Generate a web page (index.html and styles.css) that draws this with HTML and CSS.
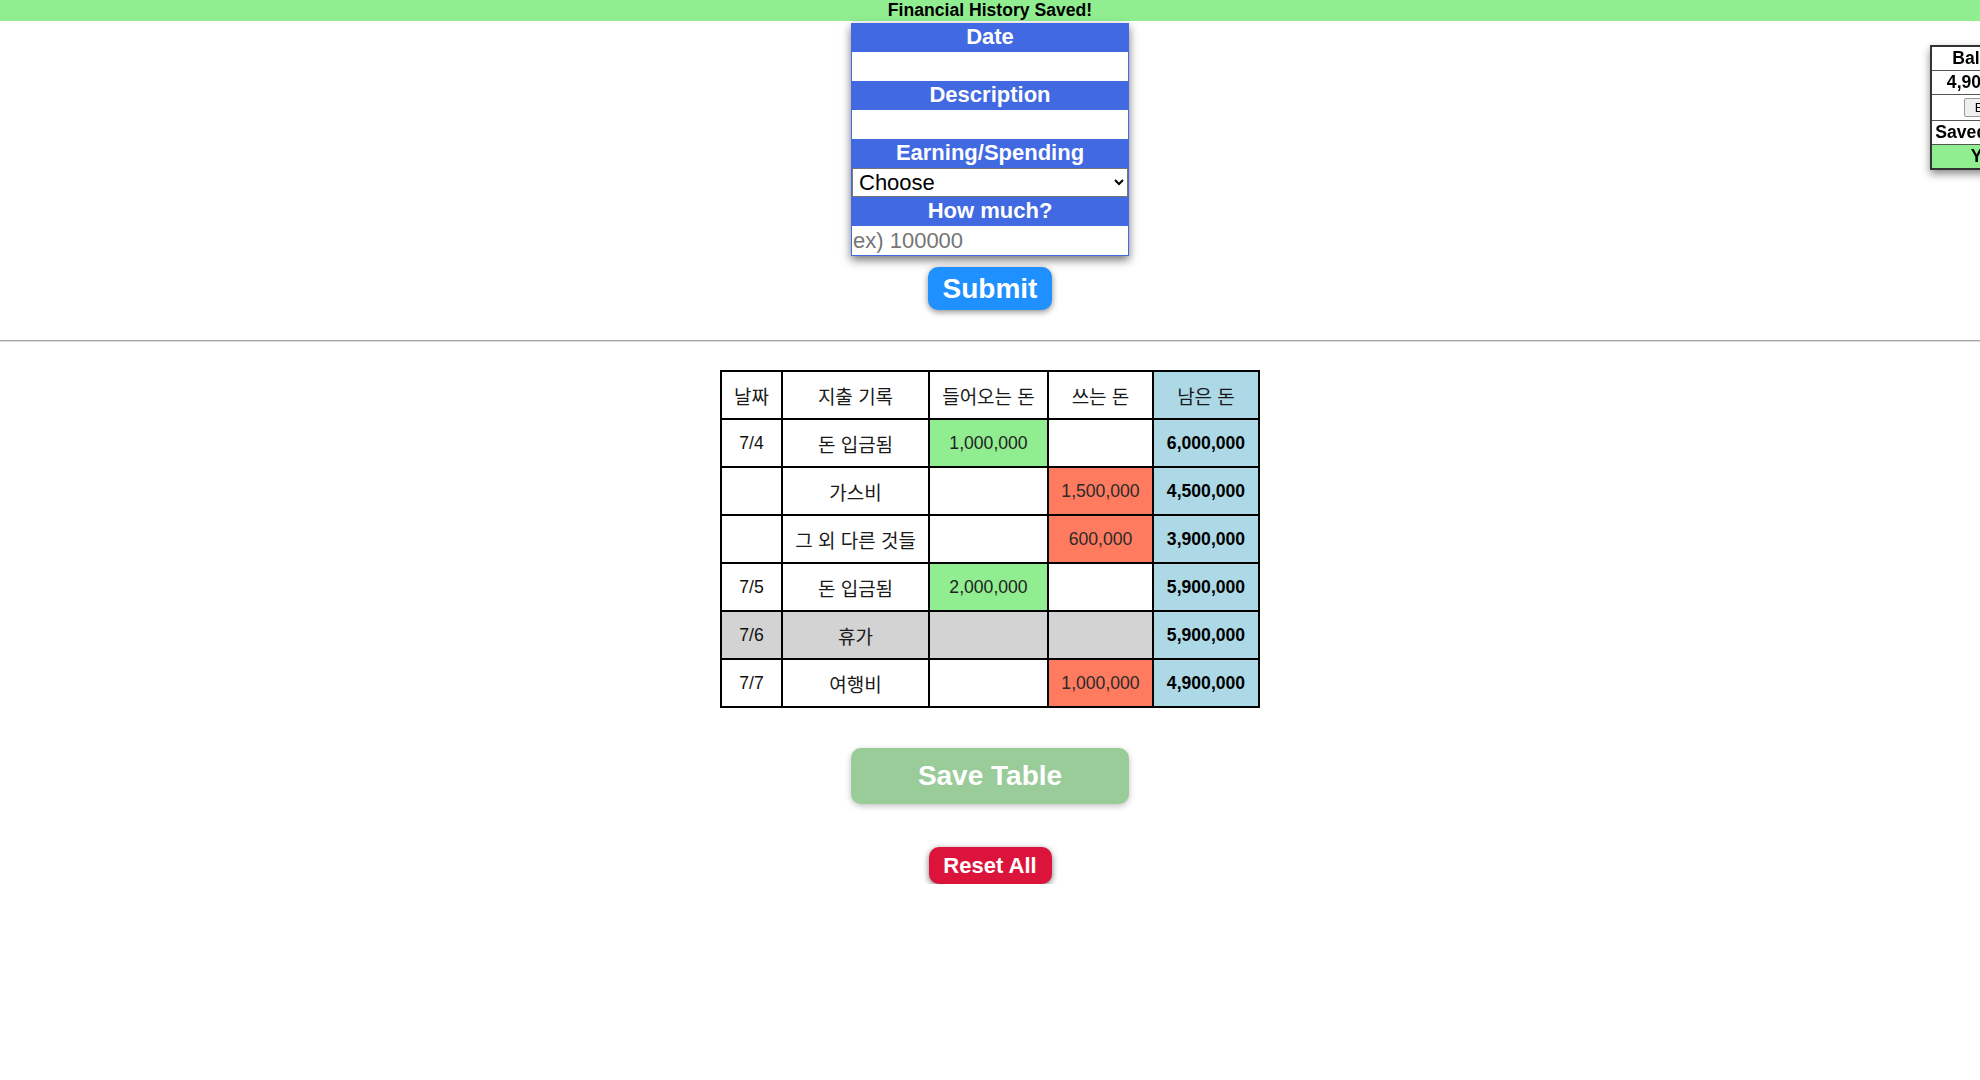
FILE: index.html
```html
<!DOCTYPE html>
<html lang="ko">
<head>
<meta charset="utf-8">
<title>Financial History</title>
<link rel="stylesheet" href="styles.css">
</head>
<body>
<div class="notice">Financial History Saved!</div>

<form class="entry">
  <label class="entry-label">Date</label>
  <input class="entry-input" type="text">
  <label class="entry-label">Description</label>
  <input class="entry-input" type="text">
  <label class="entry-label">Earning/Spending</label>
  <select class="entry-select"><option>Choose</option></select>
  <label class="entry-label">How much?</label>
  <input class="entry-input" type="text" placeholder="ex) 100000">
</form>

<div class="actions submit-wrap">
  <button class="btn-submit" type="button">Submit</button>
</div>

<hr class="divider">

<table class="ledger">
  <thead>
    <tr>
      <th class="c-date ko">날짜</th>
      <th class="c-desc ko">지출 기록</th>
      <th class="c-in ko">들어오는 돈</th>
      <th class="c-out ko">쓰는 돈</th>
      <th class="c-bal ko bal">남은 돈</th>
    </tr>
  </thead>
  <tbody>
    <tr>
      <td>7/4</td><td class="ko">돈 입금됨</td><td class="earn">1,000,000</td><td></td><td class="bal">6,000,000</td>
    </tr>
    <tr>
      <td></td><td class="ko">가스비</td><td></td><td class="spend">1,500,000</td><td class="bal">4,500,000</td>
    </tr>
    <tr>
      <td></td><td class="ko">그 외 다른 것들</td><td></td><td class="spend">600,000</td><td class="bal">3,900,000</td>
    </tr>
    <tr>
      <td>7/5</td><td class="ko">돈 입금됨</td><td class="earn">2,000,000</td><td></td><td class="bal">5,900,000</td>
    </tr>
    <tr class="off">
      <td>7/6</td><td class="ko">휴가</td><td></td><td></td><td class="bal">5,900,000</td>
    </tr>
    <tr>
      <td>7/7</td><td class="ko">여행비</td><td></td><td class="spend">1,000,000</td><td class="bal">4,900,000</td>
    </tr>
  </tbody>
</table>

<div class="actions save-wrap">
  <button class="btn-save" type="button">Save Table</button>
</div>
<div class="actions reset-wrap">
  <button class="btn-reset" type="button">Reset All</button>
</div>

<div class="status">
  <div class="status-row">Balance</div>
  <div class="status-row">4,900,000</div>
  <div class="status-row status-btn"><button class="mini-btn" type="button">Edit</button></div>
  <div class="status-row">Saved Table</div>
  <div class="status-row status-yes">Yes</div>
</div>
</body>
</html>
```

FILE: styles.css
```css
html, body {
  margin: 0;
  padding: 0;
  background: #fff;
  overflow: hidden;
}
body {
  font-family: "Liberation Sans", Arial, "Noto Sans CJK KR", sans-serif;
  color: #000;
  font-size: 17.6px;
}

.notice {
  background: #90ee90;
  height: 21px;
  line-height: 21px;
  text-align: center;
  font-weight: bold;
  font-size: 17.6px;
}

.entry {
  width: 278px;
  box-sizing: border-box;
  margin: 2px auto 0;
  background: #4169e1;
  padding: 0 1px 1px;
  box-shadow: 0 4px 9px rgba(0, 0, 0, 0.55);
  display: flex;
  flex-direction: column;
}
.entry-label {
  display: block;
  height: 29px;
  line-height: 28px;
  text-align: center;
  color: #fff;
  font-weight: bold;
  font-size: 22px;
}
.entry-input {
  display: block;
  width: 100%;
  box-sizing: border-box;
  height: 29px;
  margin: 0;
  border: none;
  background: #fff;
  padding: 0 1px;
  font-family: "Liberation Sans", Arial, sans-serif;
  font-size: 22px;
  color: #000;
  outline: none;
}
.entry-input::placeholder {
  color: #757575;
}
.entry-select {
  display: block;
  width: 100%;
  box-sizing: border-box;
  height: 29px;
  margin: 0;
  border: 1px solid #767676;
  border-radius: 0;
  background: #fff;
  padding: 0 2px;
  font-family: "Liberation Sans", Arial, sans-serif;
  font-size: 22px;
  color: #000;
}

.actions {
  display: flex;
  justify-content: center;
}
.submit-wrap {
  margin-top: 11px;
}
.btn-submit {
  width: 124px;
  height: 43px;
  border: none;
  border-radius: 10px;
  background: #1e90ff;
  color: #fff;
  font-family: "Liberation Sans", Arial, sans-serif;
  font-weight: bold;
  font-size: 28px;
  padding: 0;
  box-shadow: 0 2px 6px rgba(0, 0, 0, 0.45);
}

.divider {
  margin: 30px 0 0;
  height: 0;
  border: none;
  border-top: 1px solid #a8a8a8;
  border-bottom: 1px solid #dcdcdc;
}

.ledger {
  margin: 28px auto 0;
  border-collapse: collapse;
  border: 2px solid #000;
  font-size: 17.6px;
}
.ledger th,
.ledger td {
  border: 2px solid #000;
  height: 46px;
  padding: 0;
  text-align: center;
  vertical-align: middle;
  font-weight: normal;
  color: #111;
}
.ledger .ko {
  font-size: 19px;
  color: #1a1a1a;
}
.c-date { width: 59px; }
.c-desc { width: 145px; }
.c-in { width: 117px; }
.c-out { width: 103px; }
.c-bal { width: 104px; }

.ledger td.bal {
  font-weight: bold;
  color: #000;
}
.ledger .bal {
  background: #add8e6;
}
.ledger .earn {
  background: #90ee90;
  color: #222;
}
.ledger .spend {
  background: #ff7b5f;
  color: #2a2a2a;
}
.ledger tr.off td {
  background: #d3d3d3;
}
.ledger tr.off td.bal {
  background: #add8e6;
}

.save-wrap {
  margin-top: 40px;
}
.btn-save {
  width: 278px;
  height: 56px;
  border: none;
  border-radius: 10px;
  background: #99cc99;
  color: #fff;
  font-family: "Liberation Sans", Arial, sans-serif;
  font-weight: bold;
  font-size: 28px;
  padding: 0;
  box-shadow: 0 2px 6px rgba(0, 0, 0, 0.25);
}

.reset-wrap {
  margin-top: 43px;
}
.btn-reset {
  width: 123px;
  height: 37px;
  border: none;
  border-radius: 10px;
  background: #dc143c;
  color: #fff;
  font-family: "Liberation Sans", Arial, sans-serif;
  font-weight: bold;
  font-size: 22px;
  padding: 0;
  box-shadow: 0 2px 6px rgba(0, 0, 0, 0.55);
}

.status {
  position: fixed;
  left: 1930px;
  top: 45px;
  width: 108px;
  border: 2px solid #333;
  background: #fff;
  box-shadow: 0 4px 8px rgba(0, 0, 0, 0.45);
  font-weight: bold;
  font-size: 17.6px;
}
.status-row {
  height: 23px;
  line-height: 23px;
  text-align: center;
  border-bottom: 1px solid #555;
  white-space: nowrap;
}
.status-btn {
  height: 25px;
  display: flex;
  align-items: center;
  justify-content: center;
}
.mini-btn {
  font-family: "Liberation Sans", Arial, sans-serif;
  font-size: 13px;
  height: 19px;
  width: 44px;
  padding: 0;
  border: 1px solid #999;
  border-radius: 2px;
  background: #efefef;
}
.status-yes {
  background: #90ee90;
  border-bottom: none;
}
```
